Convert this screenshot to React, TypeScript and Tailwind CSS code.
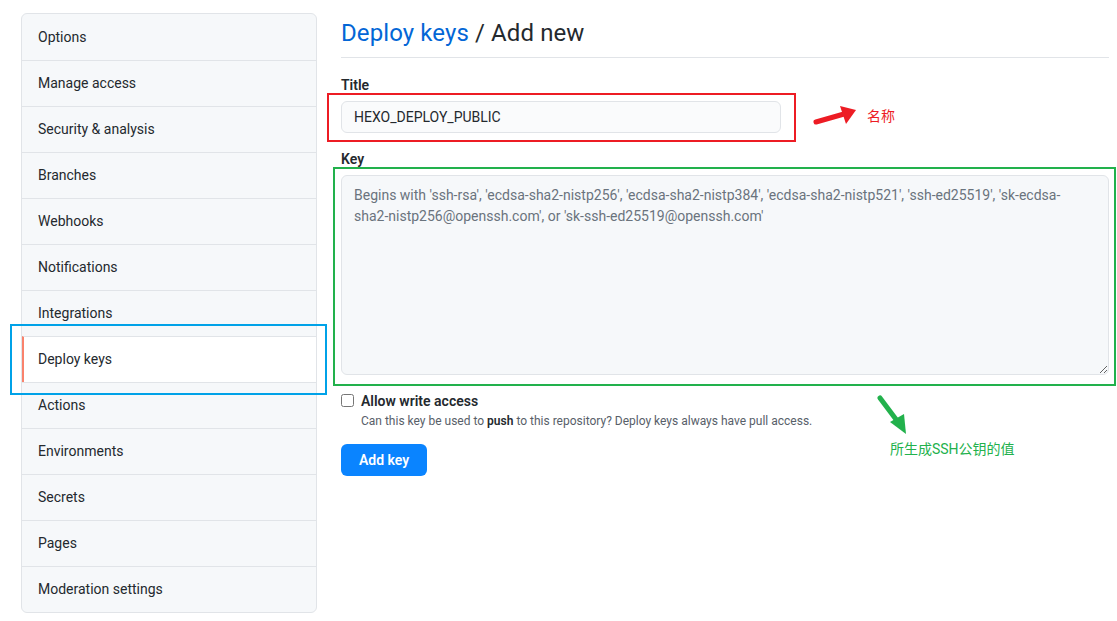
import React from "react";

const items = [
  "Options",
  "Manage access",
  "Security & analysis",
  "Branches",
  "Webhooks",
  "Notifications",
  "Integrations",
  "Deploy keys",
  "Actions",
  "Environments",
  "Secrets",
  "Pages",
  "Moderation settings",
];

const placeholder =
  "Begins with 'ssh-rsa', 'ecdsa-sha2-nistp256', 'ecdsa-sha2-nistp384', 'ecdsa-sha2-nistp521', 'ssh-ed25519', 'sk-ecdsa-\nsha2-nistp256@openssh.com', or 'sk-ssh-ed25519@openssh.com'";

export default function App() {
  return (
    <div
      className="relative w-[1117px] h-[621px] bg-white text-[#24292e] overflow-hidden"
      style={{ fontFamily: '"Segoe UI", Roboto, "Noto Sans CJK SC", sans-serif' }}
    >
      <div className="flex pt-[13px] pl-[21px] pr-[8px] gap-[24px]">
        {/* Sidebar */}
        <nav className="w-[296px] shrink-0 border border-[#e1e4e8] rounded-[6px] bg-[#f6f8fa] overflow-hidden">
          {items.map((it, i) => {
            const active = it === "Deploy keys";
            return (
              <div
                key={it}
                className={
                  "h-[46px] flex items-center text-[14px] " +
                  (i > 0 ? "border-t border-[#e1e4e8] " : "") +
                  (active
                    ? "bg-white border-l-2 border-l-[#f9826c] pl-[14px]"
                    : "pl-[16px]")
                }
              >
                {it}
              </div>
            );
          })}
        </nav>

        {/* Main */}
        <main className="flex-1 min-w-0">
          <div className="pt-[4px] pb-[8px] border-b border-[#e1e4e8]">
            <h2 className="text-[24px] leading-[32px] font-normal tracking-[0.1px]">
              <span className="text-[#0366d6]">Deploy keys</span> / Add new
            </h2>
          </div>

          <div className="mt-[17px]">
            <label className="block text-[14px] leading-[20px] font-semibold">Title</label>
            <input
              readOnly
              value="HEXO_DEPLOY_PUBLIC"
              className="mt-[6px] w-[440px] h-[32px] px-[12px] text-[14px] border border-[#e1e4e8] rounded-[6px] bg-[#fafbfc] outline-none"
            />
          </div>

          <div className="mt-[16px]">
            <label className="block text-[14px] leading-[20px] font-semibold">Key</label>
            <textarea
              placeholder={placeholder}
              className="mt-[6px] block w-full h-[200px] px-[12px] py-[9px] text-[14px] leading-[21px] border border-[#e1e4e8] rounded-[6px] bg-[#f6f8fa] outline-none placeholder:text-[#6a737d]"
            />
          </div>

          <div className="mt-[16px] flex items-start gap-[7px]">
            <input type="checkbox" className="mt-[3px] w-[13px] h-[13px] m-0" />
            <div>
              <div className="text-[14px] leading-[20px] font-semibold">Allow write access</div>
              <div className="text-[12px] leading-[20px] text-[#586069]">
                Can this key be used to <b className="text-[#24292e] font-semibold">push</b> to this repository? Deploy keys always have pull access.
              </div>
            </div>
          </div>

          <button className="mt-[13px] h-[32px] px-[18px] rounded-[6px] bg-[#0a84ff] text-white text-[14px] font-semibold">
            Add key
          </button>
        </main>
      </div>

      {/* Annotations */}
      <div className="absolute left-[10px] top-[324px] w-[317px] h-[71px] border-2 border-[#00a2e8] pointer-events-none" />
      <div className="absolute left-[327px] top-[93px] w-[469px] h-[49px] border-2 border-[#ed1c24] pointer-events-none" />
      <div className="absolute left-[333px] top-[167px] w-[783px] h-[219px] border-2 border-[#22b14c] pointer-events-none" />

      <svg className="absolute left-[810px] top-[100px]" width="50" height="30" viewBox="0 0 50 30">
        <line x1="6" y1="22" x2="34" y2="14" stroke="#ed1c24" strokeWidth="5" strokeLinecap="round" />
        <polygon points="46,10 30,6 36,24" fill="#ed1c24" />
      </svg>
      <div className="absolute left-[867px] top-[106px] text-[14px] leading-[20px] text-[#ed1c24]">名称</div>

      <svg className="absolute left-[870px] top-[390px]" width="45" height="50" viewBox="0 0 45 50">
        <line x1="10" y1="8" x2="28" y2="32" stroke="#22b14c" strokeWidth="5" strokeLinecap="round" />
        <polygon points="36,44 20,32 34,24" fill="#22b14c" />
      </svg>
      <div className="absolute left-[890px] top-[439px] text-[14px] leading-[20px] text-[#22b14c]">所生成SSH公钥的值</div>
    </div>
  );
}
